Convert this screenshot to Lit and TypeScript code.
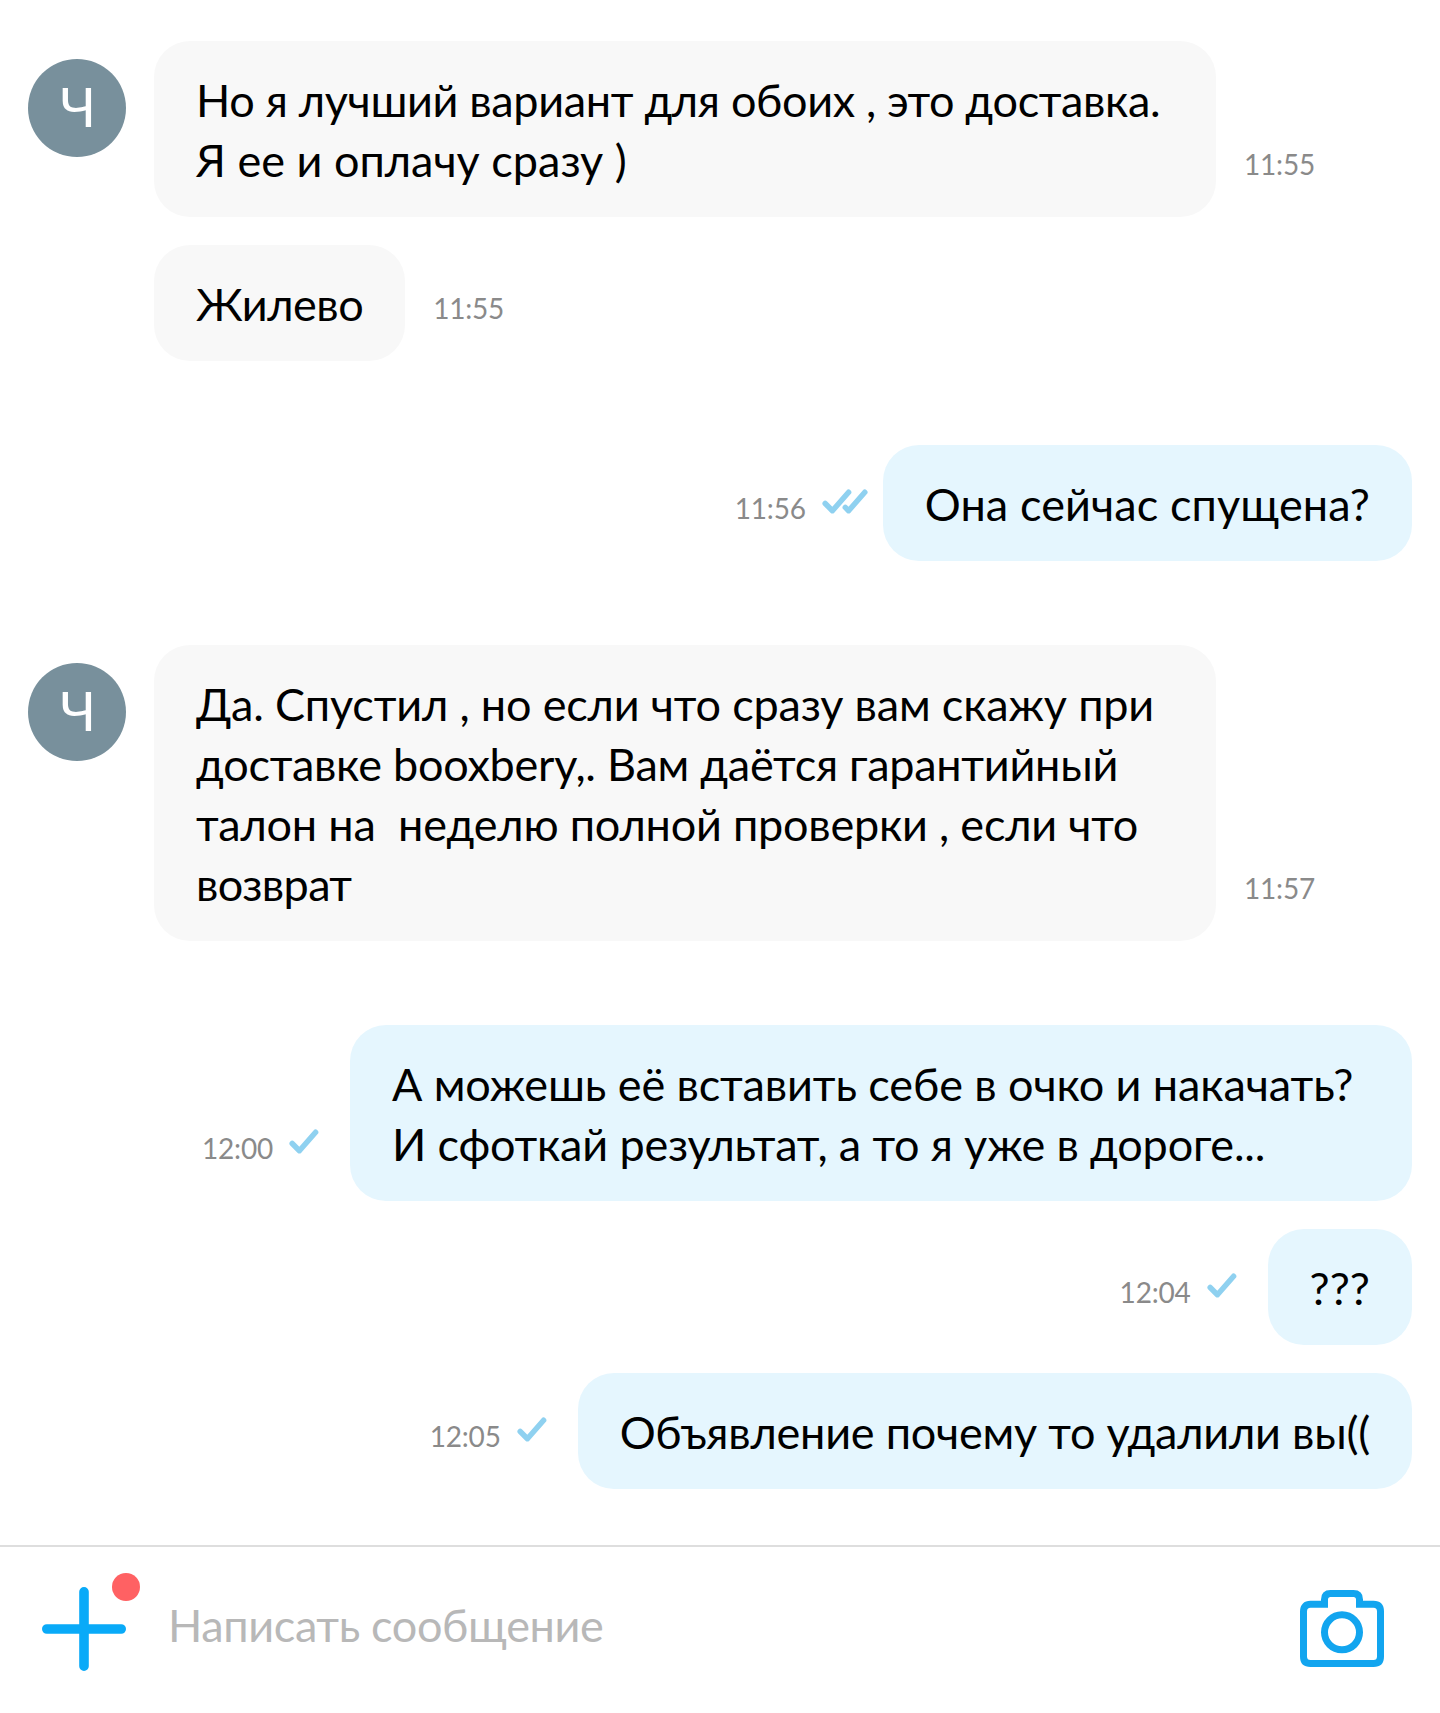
import { LitElement, html, svg, css } from 'lit';
import { customElement, property } from 'lit/decorators.js';
import { classMap } from 'lit/directives/class-map.js';
import { styleMap } from 'lit/directives/style-map.js';

type Status = 'sent' | 'read';

interface Line {
  text: string;
  // letter spacing in px
  tracking?: number;
}

interface Message {
  lines: Line[];
  time: string;
  status?: Status;
}

interface Group {
  own: boolean;
  initial?: string;
  messages: Message[];
}

const groups: Group[] = [
  {
    own: false,
    initial: 'Ч',
    messages: [
      {
        lines: [
          { text: 'Но я лучший вариант для обоих , это доставка.', tracking: -0.34 },
          { text: 'Я ее и оплачу сразу )' },
        ],
        time: '11:55',
      },
      { lines: [{ text: 'Жилево', tracking: -0.5 }], time: '11:55' },
    ],
  },
  {
    own: true,
    messages: [
      {
        lines: [{ text: 'Она сейчас спущена?', tracking: 0.11 }],
        time: '11:56',
        status: 'read',
      },
    ],
  },
  {
    own: false,
    initial: 'Ч',
    messages: [
      {
        lines: [
          { text: 'Да. Спустил , но если что сразу вам скажу при', tracking: -0.17 },
          { text: 'доставке booxbery,. Вам даётся гарантийный', tracking: -0.26 },
          { text: 'талон на  неделю полной проверки , если что', tracking: -0.22 },
          { text: 'возврат', tracking: -0.6 },
        ],
        time: '11:57',
      },
    ],
  },
  {
    own: true,
    messages: [
      {
        lines: [
          { text: 'А можешь её вставить себе в очко и накачать?', tracking: -0.1 },
          { text: 'И сфоткай результат, а то я уже в дороге...', tracking: -0.17 },
        ],
        time: '12:00',
        status: 'sent',
      },
      { lines: [{ text: '???' }], time: '12:04', status: 'sent' },
      {
        lines: [{ text: 'Объявление почему то удалили вы((', tracking: -0.22 }],
        time: '12:05',
        status: 'sent',
      },
    ],
  },
];

@customElement('chat-message')
export class ChatMessage extends LitElement {
  @property({ attribute: false }) message!: Message;
  @property({ type: Boolean }) own = false;

  static styles = css`
    :host {
      display: block;
    }

    .row {
      display: flex;
      align-items: flex-end;
      gap: 28px;
    }

    .row.own {
      flex-direction: row-reverse;
      gap: 15px;
    }

    .bubble {
      box-sizing: border-box;
      max-width: 1062px;
      padding: 29px 42px 27px;
      border-radius: 36px;
      background-color: #f8f8f8;
      color: #000;
      font-size: 45px;
      line-height: 60px;
      white-space: pre;
    }

    .bubble.long {
      width: 1062px;
    }

    .own .bubble {
      background-color: #e5f6fe;
    }

    .meta {
      display: flex;
      align-items: flex-end;
      gap: 16px;
      margin-bottom: 36px;
      color: #8a8a8a;
      font-size: 28px;
      letter-spacing: -0.2px;
      line-height: 34px;
    }

    .ticks {
      display: block;
      width: 46px;
      height: 26px;
      margin-bottom: 10px;
      fill: none;
      stroke: #8fd1f0;
      stroke-width: 5.5;
      stroke-linecap: round;
      stroke-linejoin: round;
    }
  `;

  render() {
    const { lines, time, status } = this.message;
    return html`
      <div class=${classMap({ row: true, own: this.own })}>
        <div class=${classMap({ bubble: true, long: lines.length > 1 })}>${lines.map(
          ({ text, tracking = 0 }) =>
            html`<div style=${styleMap({ letterSpacing: `${tracking}px` })}>${text}</div>`
        )}</div>
        <div class="meta">
          <span>${time}</span>
          ${status
            ? html`
                <svg class="ticks" viewBox="0 0 46 26">
                  <path d="M3.2 14.5 L10.4 21.7 L26.6 3.2" />
                  ${status === 'read' ? svg`<path d="M23.3 18.4 L26.6 21.7 L42.8 3.2" />` : ''}
                </svg>
              `
            : ''}
        </div>
      </div>
    `;
  }
}

@customElement('message-bar')
export class MessageBar extends LitElement {
  static styles = css`
    .bar {
      display: flex;
      align-items: center;
      box-sizing: border-box;
      height: 168px;
      padding: 0 56px 2px 42px;
      border-top: 2px solid #dedede;
    }

    .attach {
      position: relative;
      width: 84px;
      height: 84px;
    }

    .attach svg {
      display: block;
      stroke: #09aaf8;
      stroke-width: 9.6;
      stroke-linecap: round;
    }

    .dot {
      position: absolute;
      top: -14px;
      right: -14px;
      width: 28px;
      height: 28px;
      border-radius: 50%;
      background-color: #ff6163;
    }

    .placeholder {
      flex: 1;
      margin-left: 42px;
      padding-bottom: 8px;
      color: #b8b8b8;
      font-size: 45px;
      letter-spacing: -0.37px;
      line-height: 60px;
    }

    .camera {
      display: block;
      margin-bottom: 1px;
      fill: none;
      stroke: #12a5ef;
      stroke-width: 7;
    }
  `;

  render() {
    return html`
      <div class="bar">
        <div class="attach">
          <svg width="84" height="84" viewBox="0 0 84 84">
            <path d="M42 4.8 V79.2 M4.8 42 H79.2" />
          </svg>
          <span class="dot"></span>
        </div>
        <div class="placeholder">Написать сообщение</div>
        <svg class="camera" width="84" height="77" viewBox="0 0 84 77">
          <path
            d="M24.5 17.8 V9.5 Q24.5 3.5 30.5 3.5 H53.5 Q59.5 3.5 59.5 9.5 V14.3 H73.5 Q80.5 14.3 80.5 21.5 V66.5 Q80.5 73.5 73.5 73.5 H10.5 Q3.5 73.5 3.5 66.5 V21.5 Q3.5 14.3 10.5 14.3 H28"
          />
          <circle cx="42" cy="42.3" r="17.5" />
        </svg>
      </div>
    `;
  }
}

@customElement('app-root')
export class AppRoot extends LitElement {
  static styles = css`
    :host {
      display: flex;
      flex-direction: column;
      justify-content: space-between;
      box-sizing: border-box;
      height: 1713px;
      padding-top: 41px;
      background-color: #fff;
      font-family: Lato, 'Liberation Sans', sans-serif;
    }

    .chat {
      display: flex;
      flex-direction: column;
      gap: 84px;
      padding: 0 28px;
    }

    .group {
      display: flex;
      align-items: flex-start;
      gap: 28px;
    }

    .avatar {
      flex: none;
      box-sizing: border-box;
      width: 98px;
      height: 98px;
      margin-top: 18px;
      padding-left: 2px;
      border-radius: 50%;
      background-color: #78909c;
      color: #fff;
      font-size: 54px;
      line-height: 96px;
      text-align: center;
    }

    .messages {
      flex: 1;
      display: flex;
      flex-direction: column;
      gap: 28px;
    }
  `;

  render() {
    return html`
      <div class="chat">
        ${groups.map(
          (group) => html`
            <div class="group">
              ${group.initial ? html`<div class="avatar">${group.initial}</div>` : ''}
              <div class="messages">
                ${group.messages.map(
                  (message) => html`
                    <chat-message .message=${message} ?own=${group.own}></chat-message>
                  `
                )}
              </div>
            </div>
          `
        )}
      </div>
      <message-bar></message-bar>
    `;
  }
}
